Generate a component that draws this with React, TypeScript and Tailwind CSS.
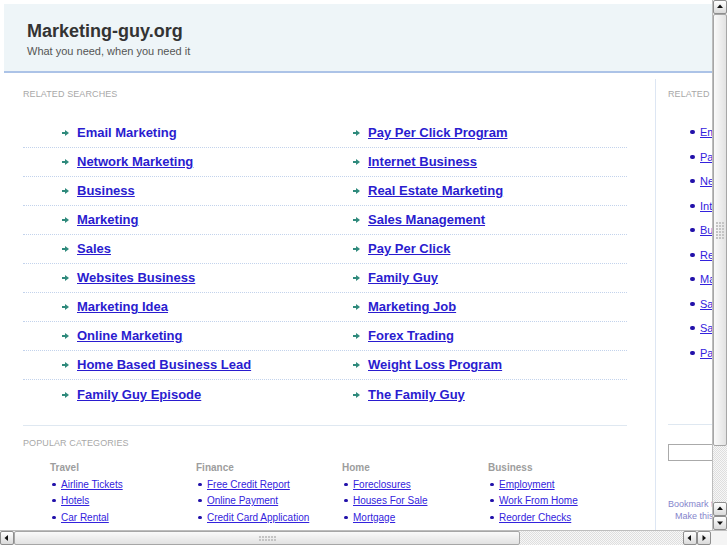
import React from 'react';

const leftLinks = [
  'Email Marketing',
  'Network Marketing',
  'Business',
  'Marketing',
  'Sales',
  'Websites Business',
  'Marketing Idea',
  'Online Marketing',
  'Home Based Business Lead',
  'Family Guy Episode',
];

const rightLinks = [
  'Pay Per Click Program',
  'Internet Business',
  'Real Estate Marketing',
  'Sales Management',
  'Pay Per Click',
  'Family Guy',
  'Marketing Job',
  'Forex Trading',
  'Weight Loss Program',
  'The Family Guy',
];

const sideLinks = [
  'Email Marketing',
  'Pay Per Click Program',
  'Network Marketing',
  'Internet Business',
  'Business',
  'Real Estate Marketing',
  'Marketing',
  'Sales Management',
  'Sales',
  'Pay Per Click',
];

const categories = [
  { title: 'Travel', links: ['Airline Tickets', 'Hotels', 'Car Rental'] },
  { title: 'Finance', links: ['Free Credit Report', 'Online Payment', 'Credit Card Application'] },
  { title: 'Home', links: ['Foreclosures', 'Houses For Sale', 'Mortgage'] },
  { title: 'Business', links: ['Employment', 'Work From Home', 'Reorder Checks'] },
];

const Arrow = () => (
  <svg width="7" height="6" viewBox="0 0 7 6" className="shrink-0">
    <rect x="0" y="2" width="4" height="2" fill="#2f8a7c" />
    <path d="M3 0 L7 3 L3 6 Z" fill="#2f8a7c" />
  </svg>
);

const SearchLink = ({ text, plain }: { text: string; plain?: boolean }) => (
  <div className="flex items-center gap-[8px]">
    <Arrow />
    <a className={`text-[13px] font-bold text-[#2a1ccf] ${plain ? '' : 'underline'}`}>{text}</a>
  </div>
);

const Track = ({ className }: { className: string }) => (
  <div
    className={`${className} bg-[repeating-conic-gradient(#dedede_0_25%,#f7f7f7_0_50%)] bg-[length:2px_2px]`}
  />
);

const ArrowButton = ({ dir }: { dir: 'up' | 'down' | 'left' | 'right' }) => {
  const paths = {
    up: 'M1 5 L4 1.5 L7 5 Z',
    down: 'M1 2.5 L4 6 L7 2.5 Z',
    left: 'M5 1 L1.5 4 L5 7 Z',
    right: 'M2.5 1 L6 4 L2.5 7 Z',
  };
  return (
    <div className="w-[14px] h-[14px] shrink-0 flex items-center justify-center rounded-[2px] border border-[#8e8e8e] bg-gradient-to-b from-white to-[#dadada]">
      <svg width="8" height="8" viewBox="0 0 8 8">
        <path d={paths[dir]} fill="#111" />
      </svg>
    </div>
  );
};

const Grip = ({ vertical }: { vertical?: boolean }) => (
  <div className={`grid gap-[1px] ${vertical ? 'grid-cols-3' : 'grid-cols-6'}`}>
    {Array.from({ length: 18 }).map((_, i) => (
      <div key={i} className="w-[2px] h-[2px] bg-[#c4c4c4]" />
    ))}
  </div>
);

export default function App() {
  return (
    <div className="w-[727px] h-[545px] flex flex-col bg-white overflow-hidden font-['Liberation_Sans',Arial,sans-serif]">
      <div className="flex flex-1 min-h-0">
        <div className="w-[712px] h-full overflow-hidden">
          <div className="w-[900px] h-full pl-[4px] flex flex-col">
            <header className="mt-[4px] h-[69px] shrink-0 bg-[#eef5f8] border-b-2 border-[#acc3e7] pl-[23px] pt-[16px]">
              <h1 className="text-[18px] font-bold leading-[22px] text-[#333]">Marketing-guy.org</h1>
              <p className="text-[11px] leading-[13px] mt-[3px] text-[#555]">What you need, when you need it</p>
            </header>

            <div className="flex flex-1 pt-[6px]">
              <section className="w-[652px] shrink-0 border-r border-[#dde6f3] pl-[19px] pt-[10px]">
                <h2 className="text-[9px] leading-[11px] tracking-[0.1px] text-[#a8a8a8]">RELATED SEARCHES</h2>
                <div className="mt-[19px] w-[604px]">
                  {leftLinks.map((l, i) => (
                    <div
                      key={l}
                      className={`flex h-[29px] items-center ${
                        i < leftLinks.length - 1 ? 'border-b border-dotted border-[#c3d3ec]' : ''
                      }`}
                    >
                      <div className="w-[330px] pl-[39px]">
                        <SearchLink text={l} plain={i === 0} />
                      </div>
                      <SearchLink text={rightLinks[i]} />
                    </div>
                  ))}
                </div>
                <div className="mt-[16px] w-[604px] border-t border-[#dfe8f1]" />
                <h2 className="mt-[12px] text-[9px] leading-[11px] tracking-[0.1px] text-[#a8a8a8]">POPULAR CATEGORIES</h2>
                <div className="mt-[11px] pl-[27px] flex">
                  {categories.map((c) => (
                    <div key={c.title} className="w-[146px]">
                      <h3 className="text-[10px] font-bold leading-[16px] text-[#9d9d9d]">{c.title}</h3>
                      {c.links.map((l) => (
                        <div key={l} className="flex items-center h-[16.5px]">
                          <span className="ml-[2px] w-[4px] h-[3px] rounded-full bg-[#2211aa]" />
                          <a className="ml-[5px] text-[10px] text-[#3322dd] underline">{l}</a>
                        </div>
                      ))}
                    </div>
                  ))}
                </div>
              </section>

              <aside className="w-[200px] pl-[12px] pt-[10px]">
                <h2 className="text-[9px] leading-[11px] tracking-[0.1px] text-[#a8a8a8]">RELATED SEARCHES</h2>
                <ul className="mt-[20px]">
                  {sideLinks.map((l, i) => (
                    <li key={i} className="flex items-center h-[24.5px] pl-[22px]">
                      <span className="w-[5px] h-[4px] rounded-full bg-[#2211aa]" />
                      <a className="ml-[5px] text-[11px] text-[#3322dd] underline whitespace-nowrap">{l}</a>
                    </li>
                  ))}
                </ul>
                <div className="mt-[59px] border-t border-[#dfe8f1]" />
                <div className="mt-[19px] h-[17px] w-[160px] border border-[#aaa] bg-white" />
                <p className="mt-[37px] text-[9px] leading-[12px] text-[#8585cc] whitespace-nowrap">Bookmark this page</p>
                <p className="pl-[7px] text-[9px] leading-[13px] text-[#8585cc] whitespace-nowrap">Make this your homepage</p>
              </aside>
            </div>
          </div>
        </div>

        <div className="w-[15px] h-full flex flex-col border-l border-[#bdbdbd] bg-[#efefef]">
          <ArrowButton dir="up" />
          <div className="h-[432px] rounded-[2px] border border-[#a6a6a6] bg-gradient-to-r from-[#fafafa] to-[#e2e2e2] flex items-center justify-center">
            <Grip vertical />
          </div>
          <Track className="flex-1" />
          <ArrowButton dir="up" />
          <ArrowButton dir="down" />
        </div>
      </div>

      <div className="h-[15px] flex border-t border-[#bdbdbd] bg-[#efefef]">
        <ArrowButton dir="left" />
        <div className="w-[506px] rounded-[2px] border border-[#a6a6a6] bg-gradient-to-b from-[#fafafa] to-[#e2e2e2] flex items-center justify-center">
          <div className="grid grid-cols-6 gap-[1px]">
            {Array.from({ length: 12 }).map((_, i) => (
              <div key={i} className="w-[2px] h-[2px] bg-[#c4c4c4]" />
            ))}
          </div>
        </div>
        <Track className="flex-1" />
        <ArrowButton dir="left" />
        <ArrowButton dir="right" />
        <div className="w-[16px] bg-[#f4f4f4]" />
      </div>
    </div>
  );
}
